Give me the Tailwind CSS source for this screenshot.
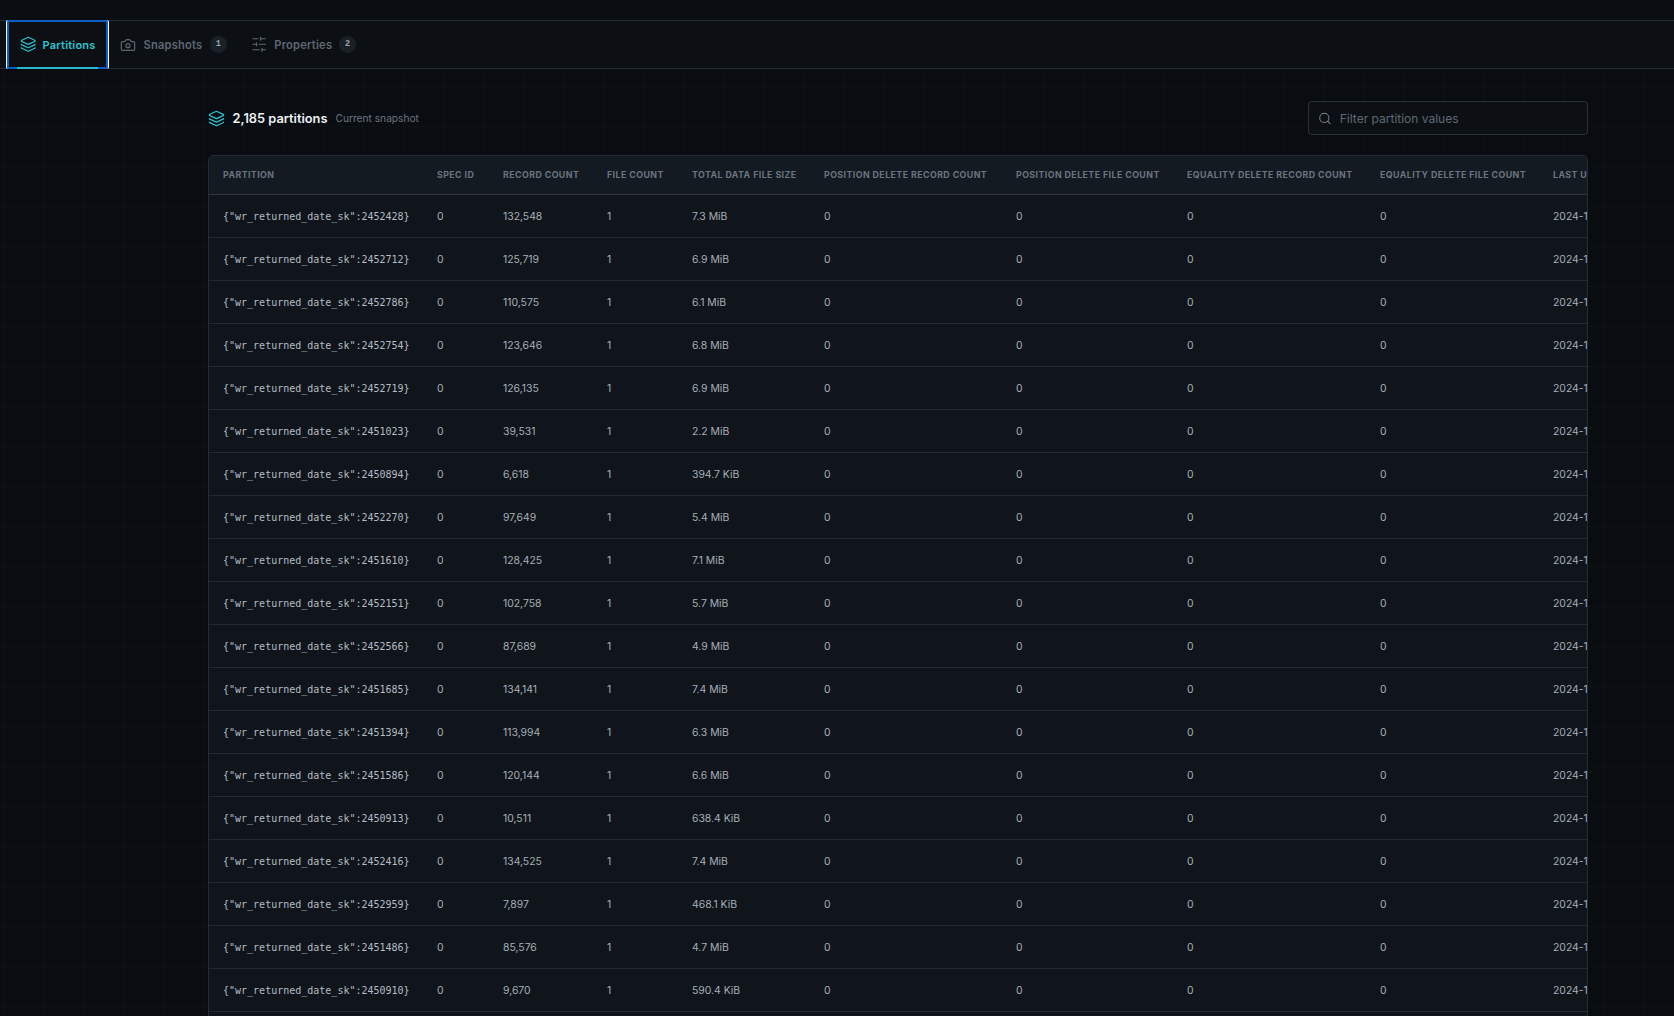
<!DOCTYPE html>
<html lang="en">
<head>
  <meta charset="UTF-8" />
  <title>Partitions</title>
  <script src="https://cdn.jsdelivr.net/npm/@tailwindcss/browser@4"></script>
</head>
<body class="h-screen overflow-hidden bg-[#090c11] font-[Inter,sans-serif] text-[#a6aeb8]">
  <div class="h-5 bg-[#0a0e13]"></div>

  <nav class="flex h-[49px] items-stretch border-y border-[#262c35] bg-[#0c1015] pl-1.5">
    <button class="relative -my-px flex h-[49px] w-[103px] items-center gap-[6px] rounded-[2px] border-x border-white pl-[13px] text-[11px] font-semibold tracking-[0.02em] text-[#2cc5d0] shadow-[inset_0_0_0_2px_#0b5ec4]">
      <svg class="h-[16.5px] w-[16.5px]" viewBox="0 0 24 24" fill="none" stroke="currentColor" stroke-width="1.75" stroke-linecap="round" stroke-linejoin="round"><path d="M12.83 2.18a2 2 0 0 0-1.66 0L2.6 6.08a1 1 0 0 0 0 1.83l8.58 3.91a2 2 0 0 0 1.66 0l8.58-3.9a1 1 0 0 0 0-1.83z"/><path d="M2 12a1 1 0 0 0 .58.91l8.6 3.91a2 2 0 0 0 1.65 0l8.58-3.9A1 1 0 0 0 22 12"/><path d="M2 17a1 1 0 0 0 .58.91l8.6 3.91a2 2 0 0 0 1.65 0l8.58-3.9A1 1 0 0 0 22 17"/></svg>
      <span class="pt-[2px]">Partitions</span>
      <span class="absolute right-2.5 bottom-0 left-2.5 h-[2px] bg-[#2cb9cc]"></span>
    </button>
    <div class="ml-[11px] flex items-center gap-[7.5px] text-[11.1px] font-semibold tracking-[0.02em] text-[#5f6873]">
      <svg class="h-4 w-4" viewBox="0 0 24 24" fill="none" stroke="currentColor" stroke-width="1.75" stroke-linecap="round" stroke-linejoin="round"><path d="M14.5 4h-5L7 7H4a2 2 0 0 0-2 2v9a2 2 0 0 0 2 2h16a2 2 0 0 0 2-2V9a2 2 0 0 0-2-2h-3l-2.5-3z"/><circle cx="12" cy="13" r="3"/></svg>
      <span class="pt-[2px]">Snapshots</span>
      <span class="flex h-[17px] w-[17px] items-center justify-center rounded-full bg-[#1a2028] font-mono text-[8.5px] text-[#9aa3ad]">1</span>
    </div>
    <div class="ml-6 flex items-center gap-[7px] text-[11.1px] font-semibold tracking-[0.02em] text-[#5f6873]">
      <svg class="h-[16.5px] w-[16.5px]" viewBox="0 0 24 24" fill="none" stroke="currentColor" stroke-width="1.75" stroke-linecap="round" stroke-linejoin="round"><line x1="21" x2="14" y1="4" y2="4"/><line x1="10" x2="3" y1="4" y2="4"/><line x1="21" x2="12" y1="12" y2="12"/><line x1="8" x2="3" y1="12" y2="12"/><line x1="21" x2="16" y1="20" y2="20"/><line x1="12" x2="3" y1="20" y2="20"/><line x1="14" x2="14" y1="2" y2="6"/><line x1="8" x2="8" y1="10" y2="14"/><line x1="16" x2="16" y1="18" y2="22"/></svg>
      <span class="pt-[2px]">Properties</span>
      <span class="flex h-[17px] w-[17px] items-center justify-center rounded-full bg-[#1a2028] font-mono text-[8.5px] text-[#9aa3ad]">2</span>
    </div>
  </nav>

  <main class="h-full bg-[linear-gradient(rgba(255,255,255,0.018)_1px,transparent_1px),linear-gradient(90deg,rgba(255,255,255,0.018)_1px,transparent_1px)] bg-[size:40px_40px] bg-[position:3px_17px] pt-8 pr-[86px] pl-[208px]">
    <div class="mb-5 flex h-[34px] items-center justify-between">
      <div class="flex items-center">
        <svg class="h-[17px] w-[17px] text-[#2cc5d0]" viewBox="0 0 24 24" fill="none" stroke="currentColor" stroke-width="1.75" stroke-linecap="round" stroke-linejoin="round"><path d="M12.83 2.18a2 2 0 0 0-1.66 0L2.6 6.08a1 1 0 0 0 0 1.83l8.58 3.91a2 2 0 0 0 1.66 0l8.58-3.9a1 1 0 0 0 0-1.83z"/><path d="M2 12a1 1 0 0 0 .58.91l8.6 3.91a2 2 0 0 0 1.65 0l8.58-3.9A1 1 0 0 0 22 12"/><path d="M2 17a1 1 0 0 0 .58.91l8.6 3.91a2 2 0 0 0 1.65 0l8.58-3.9A1 1 0 0 0 22 17"/></svg>
        <span class="ml-[7.5px] pt-[2px] text-[12.8px] font-semibold text-[#eef1f4]">2,185 partitions</span>
        <span class="ml-2 pt-[2px] text-[10.2px] text-[#6b7480]">Current snapshot</span>
      </div>
      <label class="flex h-[34px] w-[280px] items-center gap-2 rounded-[4px] border border-[#2a3038] bg-[#0c1015] pl-[9px]">
        <svg class="h-[15px] w-[15px] text-[#7b848f]" viewBox="0 0 24 24" fill="none" stroke="currentColor" stroke-width="1.75" stroke-linecap="round" stroke-linejoin="round"><path d="m21 21-4.34-4.34"/><circle cx="11" cy="11" r="8"/></svg>
        <input class="w-full bg-transparent pt-[2px] text-[12px] outline-none placeholder:text-[#5f6873]" placeholder="Filter partition values" />
      </label>
    </div>

    <div class="overflow-hidden rounded-t-[5px] border border-[#262c35] bg-[#10151b]">
      <table class="w-[1530px] table-fixed border-separate border-spacing-0 text-left">
        <colgroup>
          <col class="w-[214px]" /><col class="w-[66px]" /><col class="w-[104px]" /><col class="w-[85px]" /><col class="w-[132px]" /><col class="w-[192px]" /><col class="w-[171px]" /><col class="w-[193px]" /><col class="w-[173px]" /><col class="w-[200px]" />
        </colgroup>
        <thead>
          <tr class="h-[39px] bg-[#141a22] text-[8.8px] font-bold uppercase tracking-[0.05em] text-[#6b7580]">
            <th class="border-b border-[#2f3842] px-3.5 font-bold whitespace-nowrap">Partition</th>
            <th class="border-b border-[#2f3842] px-3.5 font-bold whitespace-nowrap">Spec ID</th>
            <th class="border-b border-[#2f3842] px-3.5 font-bold whitespace-nowrap">Record Count</th>
            <th class="border-b border-[#2f3842] px-3.5 font-bold whitespace-nowrap">File Count</th>
            <th class="border-b border-[#2f3842] px-3.5 font-bold whitespace-nowrap">Total Data File Size</th>
            <th class="border-b border-[#2f3842] px-3.5 font-bold whitespace-nowrap">Position Delete Record Count</th>
            <th class="border-b border-[#2f3842] px-3.5 font-bold whitespace-nowrap">Position Delete File Count</th>
            <th class="border-b border-[#2f3842] px-3.5 font-bold whitespace-nowrap">Equality Delete Record Count</th>
            <th class="border-b border-[#2f3842] px-3.5 font-bold whitespace-nowrap">Equality Delete File Count</th>
            <th class="border-b border-[#2f3842] px-3.5 font-bold whitespace-nowrap">Last Updated At</th>
          </tr>
        </thead>
        <tbody id="rows" class="text-[10.4px]"></tbody>
      </table>
    </div>
  </main>

  <script>
    const rows = [
      ["2452428", "132,548", "7.3 MiB"],
      ["2452712", "125,719", "6.9 MiB"],
      ["2452786", "110,575", "6.1 MiB"],
      ["2452754", "123,646", "6.8 MiB"],
      ["2452719", "126,135", "6.9 MiB"],
      ["2451023", "39,531", "2.2 MiB"],
      ["2450894", "6,618", "394.7 KiB"],
      ["2452270", "97,649", "5.4 MiB"],
      ["2451610", "128,425", "7.1 MiB"],
      ["2452151", "102,758", "5.7 MiB"],
      ["2452566", "87,689", "4.9 MiB"],
      ["2451685", "134,141", "7.4 MiB"],
      ["2451394", "113,994", "6.3 MiB"],
      ["2451586", "120,144", "6.6 MiB"],
      ["2450913", "10,511", "638.4 KiB"],
      ["2452416", "134,525", "7.4 MiB"],
      ["2452959", "7,897", "468.1 KiB"],
      ["2451486", "85,576", "4.7 MiB"],
      ["2450910", "9,670", "590.4 KiB"],
      ["2451203", "41,208", "2.3 MiB"]
    ];

    const cell = (text) => `<td class="border-b border-[#232a32] px-3.5 pt-[2px] whitespace-nowrap">${text}</td>`;

    document.getElementById("rows").innerHTML = rows.map(([date, records, size]) => `
      <tr class="h-[43px]">
        <td class="border-b border-[#232a32] px-3.5 font-['DejaVu_Sans_Mono',monospace] text-[10px] whitespace-nowrap text-[#b4bcc6]">{"wr_returned_date_sk":${date}}</td>
        ${[0, records, 1, size, 0, 0, 0, 0, "2024-11-05 09:41:27"].map(cell).join("")}
      </tr>`).join("");
  </script>
</body>
</html>
